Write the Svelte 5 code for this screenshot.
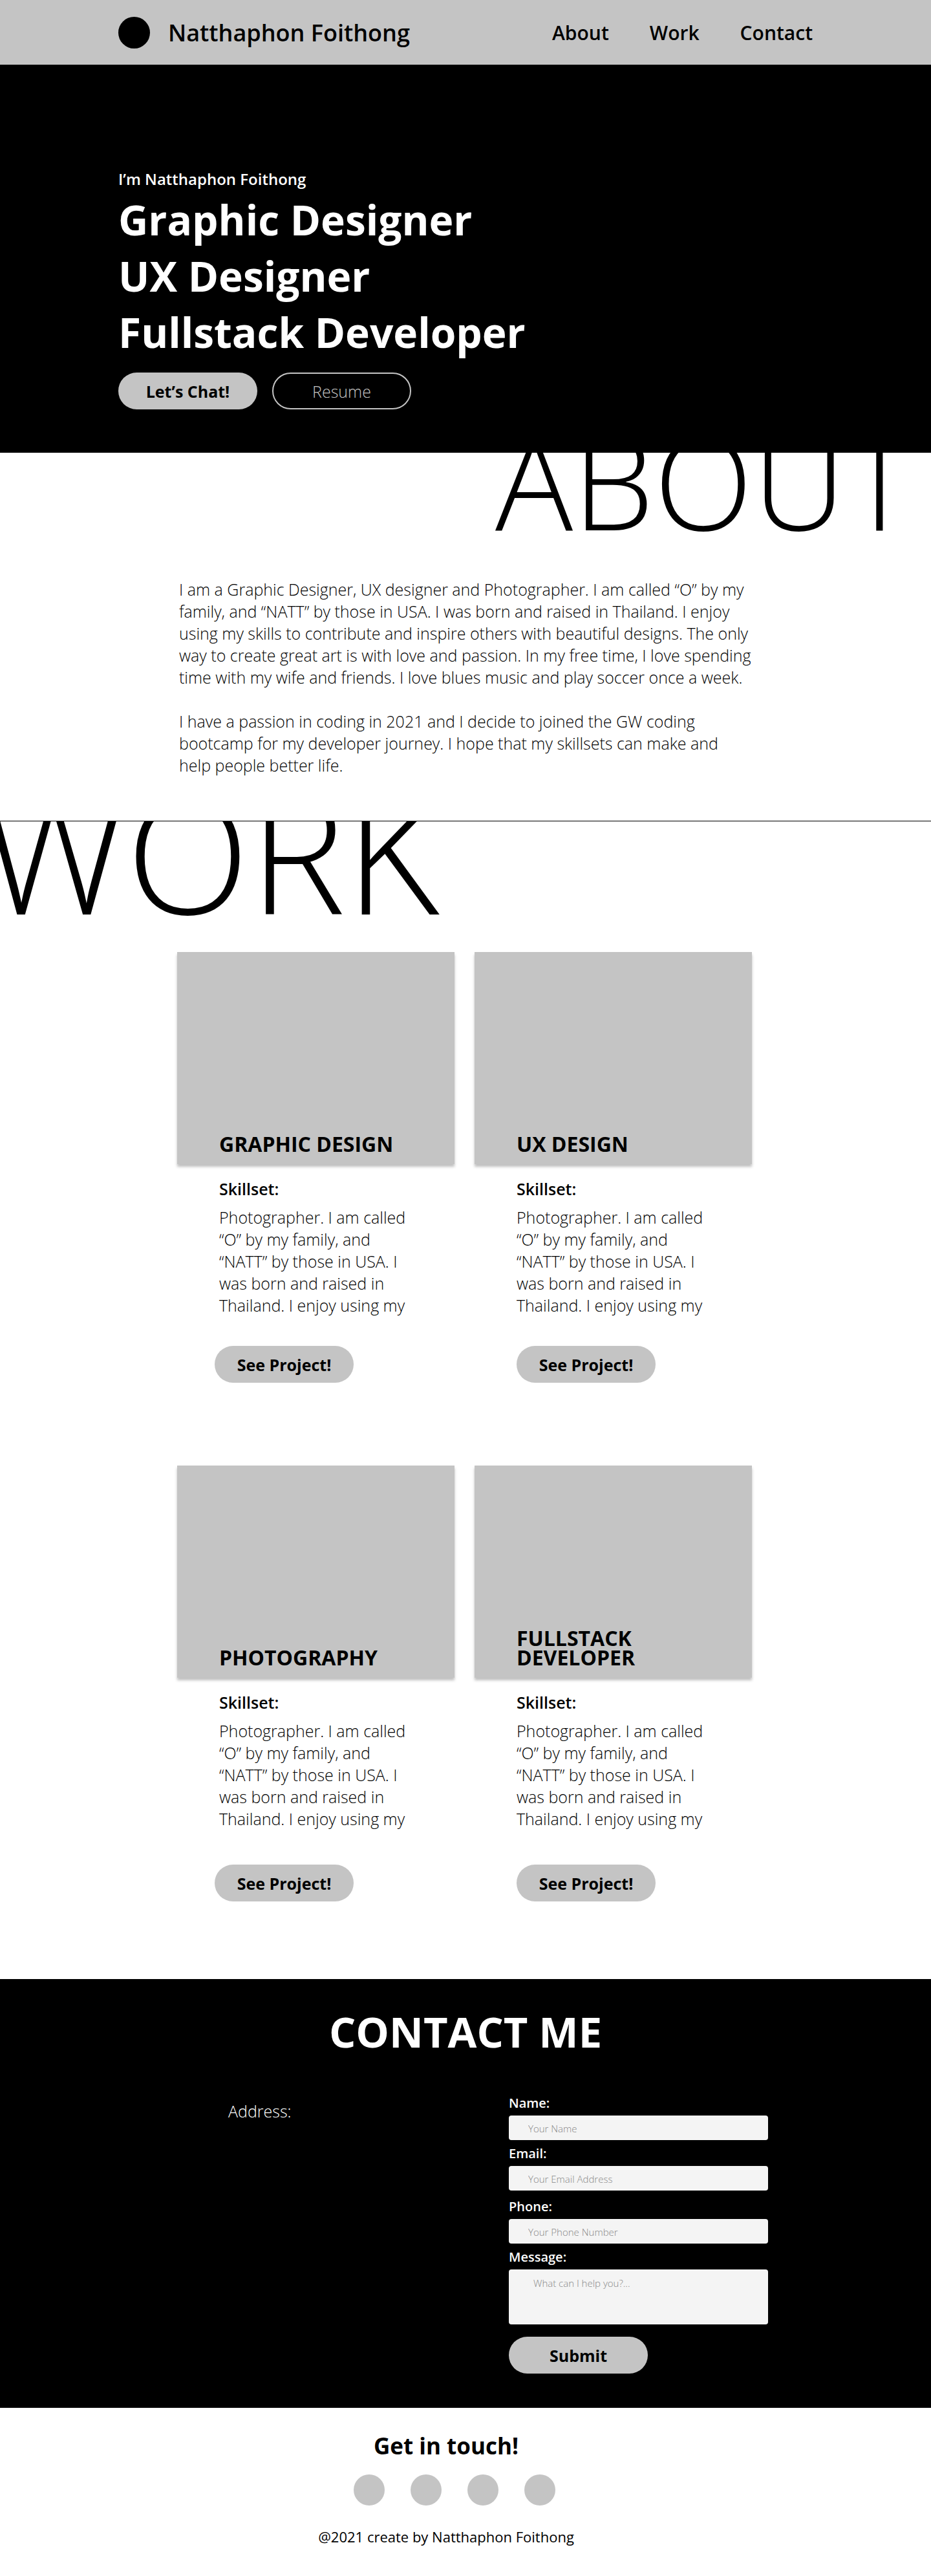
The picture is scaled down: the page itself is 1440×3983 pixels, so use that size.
<script>
  const nav = ['About', 'Work', 'Contact'];
  const roles = ['Graphic Designer', 'UX Designer', 'Fullstack Developer'];
  const rows = [
    ['GRAPHIC DESIGN', 'UX DESIGN'],
    ['PHOTOGRAPHY', 'FULLSTACK DEVELOPER']
  ];
  const blurb =
    'Photographer. I am called “O” by my family, and “NATT” by those in USA. I was born and raised in Thailand. I enjoy using my';
  const fields = [
    { id: 'name', label: 'Name:', type: 'text', hint: 'Your Name' },
    { id: 'email', label: 'Email:', type: 'email', hint: 'Your Email Address' },
    { id: 'phone', label: 'Phone:', type: 'tel', hint: 'Your Phone Number' }
  ];
  const socials = ['Facebook', 'Instagram', 'LinkedIn', 'GitHub'];
</script>

<header class="top">
  <div class="wrap bar">
    <div class="brand"><span class="logo"></span>Natthaphon Foithong</div>
    <nav>
      {#each nav as item}
        <a href="#{item.toLowerCase()}">{item}</a>
      {/each}
    </nav>
  </div>
</header>

<section class="hero">
  <div class="wrap">
    <p class="intro">I’m Natthaphon Foithong</p>
    <h1>
      {#each roles as role}
        <span>{role}</span>
      {/each}
    </h1>
    <div class="actions">
      <button class="pill">Let’s Chat!</button>
      <button class="pill outline">Resume</button>
    </div>
  </div>
</section>

<section class="about" id="about">
  <h2 class="giant">ABOUT</h2>
  <div class="prose">
    <p>
      I am a Graphic Designer, UX designer and Photographer. I am called “O” by my family, and
      “NATT” by those in USA. I was born and raised in Thailand. I enjoy using my skills to
      contribute and inspire others with beautiful designs. The only way to create great art is with
      love and passion. In my free time, I love spending time with my wife and friends. I love blues
      music and play soccer once a week.
    </p>
    <p>
      I have a passion in coding in 2021 and I decide to joined the GW coding bootcamp for my
      developer journey. I hope that my skillsets can make and help people better life.
    </p>
  </div>
</section>

<section class="work" id="work">
  <h2 class="giant">WORK</h2>
  <div class="projects">
    {#each rows as row}
      <div class="row">
        {#each row as title}
          <article>
            <div class="cover"><h3>{title}</h3></div>
            <div class="details">
              <h4>Skillset:</h4>
              <p>{blurb}</p>
              <button class="pill">See Project!</button>
            </div>
          </article>
        {/each}
      </div>
    {/each}
  </div>
</section>

<section class="contact" id="contact">
  <h2>CONTACT ME</h2>
  <div class="columns">
    <address>Address:</address>
    <form onsubmit={(e) => e.preventDefault()}>
      {#each fields as f}
        <div class="field {f.id}">
          <label for={f.id}>{f.label}</label>
          <input id={f.id} type={f.type} placeholder={f.hint} />
        </div>
      {/each}
      <div class="field">
        <label for="message">Message:</label>
        <textarea id="message" placeholder="What can I help you?..."></textarea>
      </div>
      <button class="pill submit">Submit</button>
    </form>
  </div>
</section>

<footer>
  <h2>Get in touch!</h2>
  <div class="socials">
    {#each socials as name}
      <a href="#{name.toLowerCase()}" aria-label={name}></a>
    {/each}
  </div>
  <p>@2021 create by Natthaphon Foithong</p>
</footer>

<style>
  :global(body) {
    margin: 0;
    background: #fff;
    color: #000;
    font-family: 'Open Sans', 'Noto Sans', sans-serif;
  }
  h1, h2, h3, h4, p {
    margin: 0;
  }
  a {
    color: inherit;
    text-decoration: none;
  }
  .wrap {
    max-width: 1074px;
    margin: 0 auto;
  }

  .top {
    background: #c4c4c4;
    padding: 26px 0 25px;
  }
  .bar,
  .brand,
  nav {
    display: flex;
    align-items: center;
  }
  .bar {
    justify-content: space-between;
  }
  .brand {
    gap: 28px;
    font-size: 36px;
    line-height: 48px;
    font-weight: 600;
  }
  .logo {
    width: 49px;
    height: 49px;
    border-radius: 50%;
    background: #000;
  }
  nav {
    gap: 63px;
    font-size: 30px;
    line-height: 48px;
    font-weight: 600;
  }

  .hero {
    background: #000;
    color: #fff;
    padding: 160px 0 67px;
  }
  .intro {
    font-size: 24px;
    line-height: 33px;
    font-weight: 600;
    margin-bottom: 3px;
  }
  h1 {
    font-size: 64px;
    line-height: 87px;
    font-weight: 700;
  }
  h1 span {
    display: block;
  }
  .actions {
    display: flex;
    gap: 23px;
    margin-top: 19px;
  }
  .pill {
    display: block;
    box-sizing: border-box;
    width: 215px;
    height: 57px;
    padding: 1px 0 0;
    border: 0;
    border-radius: 29px;
    background: #c4c4c4;
    color: #000;
    font: 700 25px/34px 'Open Sans', 'Noto Sans', sans-serif;
    cursor: pointer;
  }
  .outline {
    border: 2px solid #c4c4c4;
    background: transparent;
    color: #c4c4c4;
    font-weight: 300;
  }

  .giant {
    font-weight: 300;
    white-space: nowrap;
  }
  .about {
    overflow: hidden;
    border-bottom: 1px solid #000;
    padding-bottom: 69px;
  }
  .about .giant {
    font-size: 200px;
    line-height: 200px;
    margin-top: -57px;
    padding-right: 27px;
    text-align: right;
  }
  .prose {
    box-sizing: border-box;
    max-width: 892px;
    margin: 51px auto 0;
    padding: 0 2px 0 3px;
    font-size: 25px;
    line-height: 34px;
    font-weight: 300;
  }
  .prose p + p {
    margin-top: 34px;
  }

  .work {
    overflow: hidden;
    padding-bottom: 120px;
  }
  .work .giant {
    font-size: 250px;
    line-height: 250px;
    margin: -78px 0 30px -28px;
  }
  .projects {
    max-width: 892px;
    margin: 0 auto;
    display: grid;
    gap: 128px;
  }
  .row {
    display: grid;
    grid-template-columns: repeat(2, minmax(0, 429px));
    gap: 31px;
  }
  .cover {
    box-sizing: border-box;
    height: 328px;
    padding: 0 65px 16px;
    display: flex;
    align-items: flex-end;
    background: #c4c4c4;
    box-shadow: 0 4px 4px rgba(0, 0, 0, 0.25);
  }
  h3 {
    font-size: 32px;
    line-height: 30px;
    font-weight: 700;
  }
  .details {
    padding: 21px 70px 0 65px;
    font-size: 25px;
    line-height: 34px;
  }
  .details h4 {
    font-size: 25px;
    font-weight: 600;
    margin-bottom: 10px;
  }
  .details p {
    font-weight: 300;
  }
  .details .pill {
    margin-top: 46px;
  }
  .row + .row .pill {
    margin-top: 54px;
  }
  article:first-child .pill {
    margin-left: -7px;
  }

  .contact {
    background: #000;
    color: #fff;
    padding: 38px 0 53px;
  }
  .contact h2 {
    font-size: 65px;
    line-height: 87px;
    font-weight: 700;
    text-align: center;
  }
  .columns {
    box-sizing: border-box;
    max-width: 936px;
    margin: 53px auto 0;
    padding-left: 101px;
    display: grid;
    grid-template-columns: 1fr 401px;
  }
  address {
    padding-top: 9px;
    font-size: 25px;
    line-height: 34px;
    font-style: normal;
    font-weight: 300;
  }
  .field {
    margin-bottom: 7px;
  }
  .phone {
    margin-top: 11px;
  }
  label {
    display: block;
    margin-bottom: 6px;
    font-size: 20px;
    line-height: 27px;
    font-weight: 600;
  }
  input,
  textarea {
    display: block;
    box-sizing: border-box;
    width: 100%;
    height: 38px;
    padding: 2px 30px 0;
    border: 0;
    border-radius: 4px;
    background: #f4f4f4;
    font: 300 15px/20px 'Open Sans', 'Noto Sans', sans-serif;
    resize: none;
  }
  textarea {
    height: 85px;
    padding: 11px 38px;
  }
  ::placeholder {
    color: #888;
    opacity: 1;
  }
  .submit {
    margin-top: 19px;
  }

  footer {
    padding: 35px 60px 46px 0;
    text-align: center;
  }
  footer h2 {
    font-size: 35px;
    line-height: 48px;
    font-weight: 700;
  }
  .socials {
    display: flex;
    justify-content: center;
    gap: 40px;
    margin: 20px 0 33px;
    padding-left: 26px;
  }
  .socials a {
    width: 48px;
    height: 48px;
    border-radius: 50%;
    background: #c4c4c4;
  }
  footer p {
    font-size: 22px;
    line-height: 30px;
  }
</style>
